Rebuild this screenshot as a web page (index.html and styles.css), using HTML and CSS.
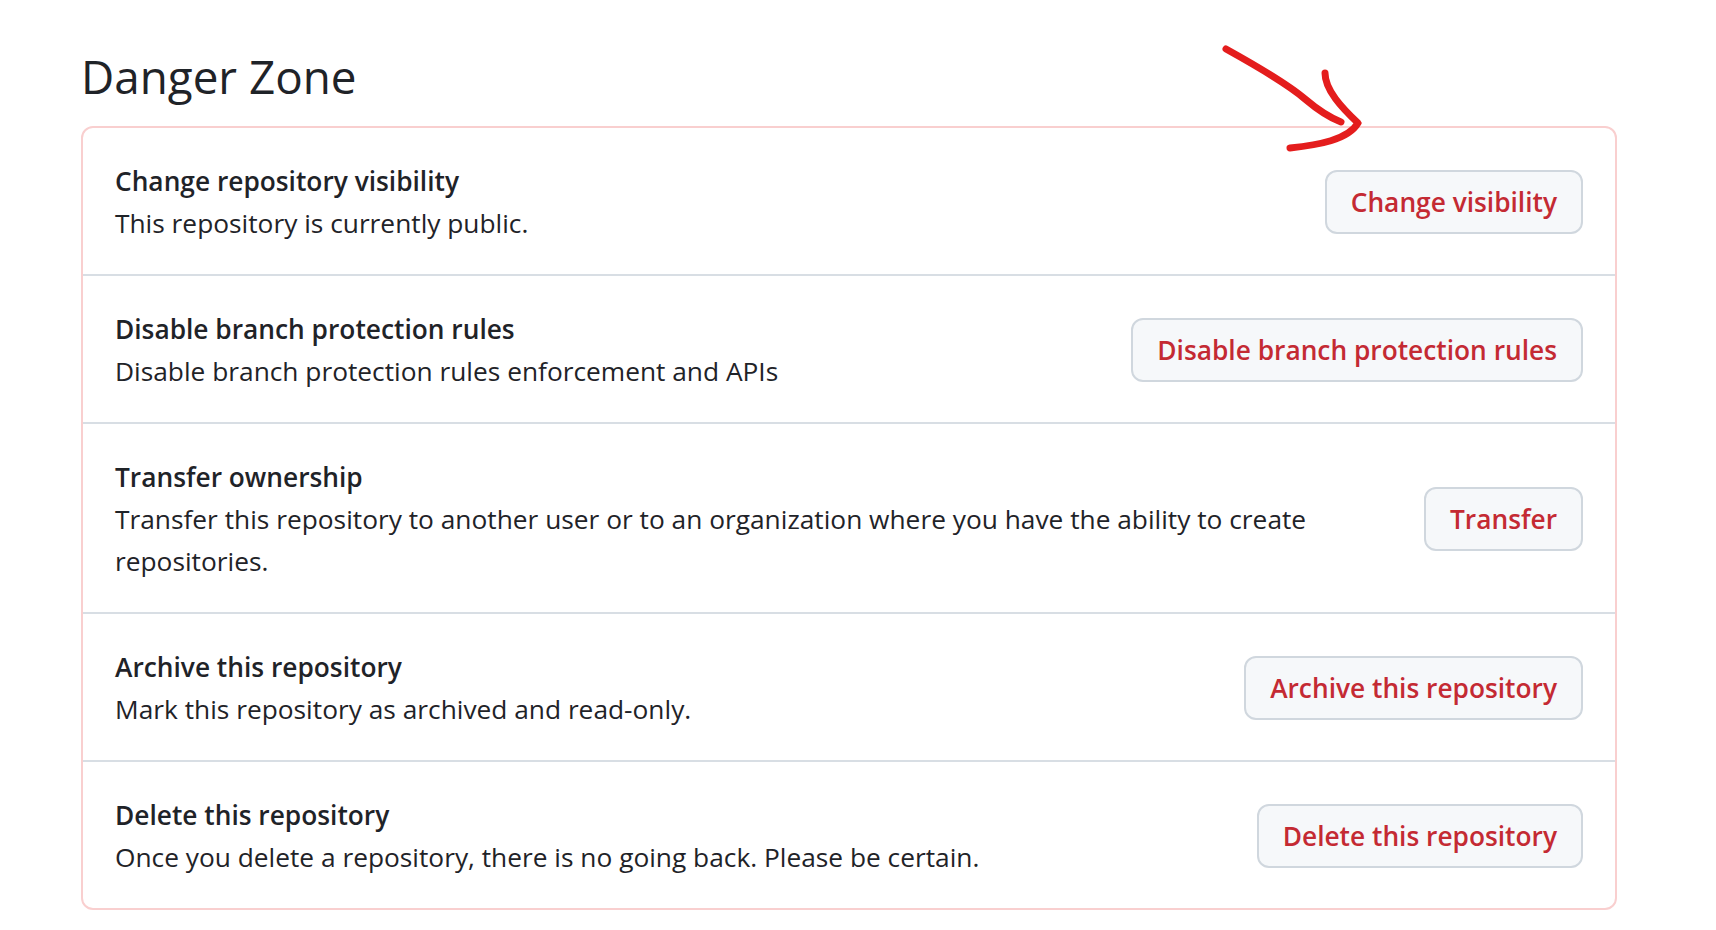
FILE: index.html
```html
<!DOCTYPE html>
<html lang="en">
<head>
<meta charset="utf-8">
<title>Danger Zone</title>
<link rel="stylesheet" href="styles.css">
</head>
<body>
<main class="page">
  <h2 class="subhead">Danger Zone</h2>
  <div class="danger-box">
    <div class="row">
      <div class="row-text">
        <strong class="row-title">Change repository visibility</strong>
        <p class="row-desc">This repository is currently public.</p>
      </div>
      <button class="btn-danger" type="button">Change visibility</button>
    </div>
    <div class="row">
      <div class="row-text">
        <strong class="row-title">Disable branch protection rules</strong>
        <p class="row-desc">Disable branch protection rules enforcement and APIs</p>
      </div>
      <button class="btn-danger" type="button">Disable branch protection rules</button>
    </div>
    <div class="row">
      <div class="row-text">
        <strong class="row-title">Transfer ownership</strong>
        <p class="row-desc">Transfer this repository to another user or to an organization where you have the ability to create repositories.</p>
      </div>
      <button class="btn-danger" type="button">Transfer</button>
    </div>
    <div class="row">
      <div class="row-text">
        <strong class="row-title">Archive this repository</strong>
        <p class="row-desc">Mark this repository as archived and read-only.</p>
      </div>
      <button class="btn-danger" type="button">Archive this repository</button>
    </div>
    <div class="row">
      <div class="row-text">
        <strong class="row-title">Delete this repository</strong>
        <p class="row-desc">Once you delete a repository, there is no going back. Please be certain.</p>
      </div>
      <button class="btn-danger" type="button">Delete this repository</button>
    </div>
  </div>
  <svg class="annotation" viewBox="1216 40 160 120" width="160" height="120" aria-hidden="true">
    <path d="M1226 49 C1262 69 1290 86 1305 99 C1318 110 1328 117 1341 122" />
    <path d="M1325 73 C1325 90 1342 108 1358 123 C1348 140 1318 145 1290 148" />
  </svg>
</main>
</body>
</html>
```
FILE: styles.css
```css
html, body {
  margin: 0;
  background: #ffffff;
}

body {
  font-family: "Open Sans", "Noto Sans", sans-serif;
  color: #1f2328;
  font-size: 26.3px;
  line-height: 42px;
}

.page {
  position: relative;
  width: 1536px;
  padding: 46px 0 0 81px;
}

.subhead {
  margin: 0 0 20px;
  font-size: 45.8px;
  font-weight: 400;
  line-height: 60px;
  color: #1f2328;
}

.danger-box {
  border: 2px solid #f9cfcf;
  border-radius: 12px;
  background: #ffffff;
}

.row {
  display: flex;
  align-items: center;
  gap: 32px;
  padding: 32px 32px 30px;
  border-top: 2px solid #d8dee4;
}

.row:first-child {
  border-top: none;
}

.row-text {
  flex: 1 1 auto;
  min-width: 0;
}

.row-title {
  display: block;
  font-weight: 600;
}

.row-desc {
  margin: 0;
}

.btn-danger {
  flex: none;
  height: 64px;
  padding: 0 24px;
  border: 2px solid #d0d7de;
  border-radius: 12px;
  background: #f6f8fa;
  color: #c42a33;
  font-family: inherit;
  font-size: 26.3px;
  font-weight: 600;
  line-height: 60px;
  white-space: nowrap;
  cursor: pointer;
}

.annotation {
  position: absolute;
  left: 1216px;
  top: 40px;
  fill: none;
  stroke: #e41d1d;
  stroke-width: 7;
  stroke-linecap: round;
  stroke-linejoin: round;
}
```
